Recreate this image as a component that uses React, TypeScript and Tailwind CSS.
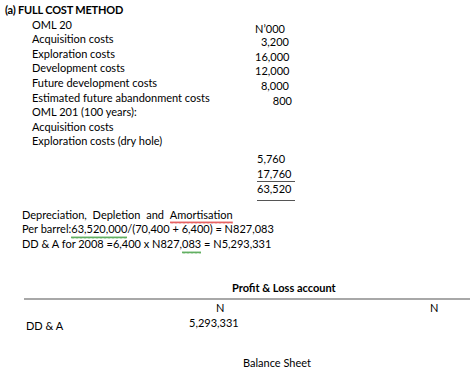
import React from "react";

const costLines = [
  "OML 20",
  "Acquisition costs",
  "Exploration costs",
  "Development costs",
  "Future development costs",
  "Estimated future abandonment costs",
  "OML 201 (100 years):",
  "Acquisition costs",
  "Exploration costs (dry hole)",
];

const amounts = ["N\u2019000", "3,200", "16,000", "12,000", "8,000", "800"];

// spell-check style wavy line under a word
const Squiggle = ({ children, color }: { children: React.ReactNode; color: string }) => (
  <span className="relative inline-block">
    {children}
    <svg className="absolute left-0 bottom-[-2px] w-full h-[3px]" preserveAspectRatio="none">
      <defs>
        <pattern id={`sq-${color}`} width="4" height="3" patternUnits="userSpaceOnUse">
          <path d="M0 2.5 L1 0.5 L2 2.5 L3 0.5 L4 2.5" fill="none" stroke={color} strokeWidth="0.8" />
        </pattern>
      </defs>
      <rect width="100%" height="3" fill={`url(#sq-${color})`} />
    </svg>
  </span>
);

const App = () => {
  return (
    <div className="w-[470px] h-[371px] overflow-hidden bg-white text-black font-['Lato','Open_Sans',sans-serif] text-[11px] leading-[14.6px]">
      <div className="pt-[3px] pl-[5px] font-bold tracking-[-0.2px]">(a) FULL COST METHOD</div>

      <div className="flex">
        <div className="ml-[32px] w-[223px]">
          {costLines.map((line, i) => (
            <div key={i}>{line}</div>
          ))}
        </div>
        <div className="w-[34px] pt-[4px] text-right">
          {amounts.map((a, i) => (
            <div key={i} className={i === 0 ? "pr-[4px] -mb-[1px]" : i === 5 ? "-mr-[3px]" : ""}>
              {a}
            </div>
          ))}
        </div>
      </div>

      <div className="ml-[257px] mt-[3px] w-[38px]">
        <div>5,760</div>
        <div>17,760</div>
        <div className="border-t border-[#555]">63,520</div>
        <div className="mt-[3px] h-px bg-[#555]" />
      </div>

      <div className="pl-[22px] mt-[7px]">
        <div className="[word-spacing:3px]">
          Depreciation, Depletion and <Squiggle color="#e03a3a">Amortisation</Squiggle>
        </div>
        <div>
          Per barrel:<Squiggle color="#3a9a3a">63,520,000</Squiggle>/(70,400 + 6,400) = N827,083
        </div>
        <div>
          DD &amp; A for 2008 =6,400 x N827,<Squiggle color="#3a9a3a">083</Squiggle> = N5,293,331
        </div>
      </div>

      <div className="mt-[29px] pl-[232px] font-bold">Profit &amp; Loss account</div>
      <div className="ml-[24px] mt-[3px] h-[2px] bg-[#a8a8a8]" />

      <div className="flex mt-[1px]">
        <div className="ml-[216px] w-[214px]">N</div>
        <div>N</div>
      </div>
      <div className="flex">
        <div className="pl-[26px] w-[189px] pt-[3px]">DD &amp; A</div>
        <div>5,293,331</div>
      </div>

      <div className="mt-[23px] pl-[243px]">Balance Sheet</div>
    </div>
  );
};

export default App;
